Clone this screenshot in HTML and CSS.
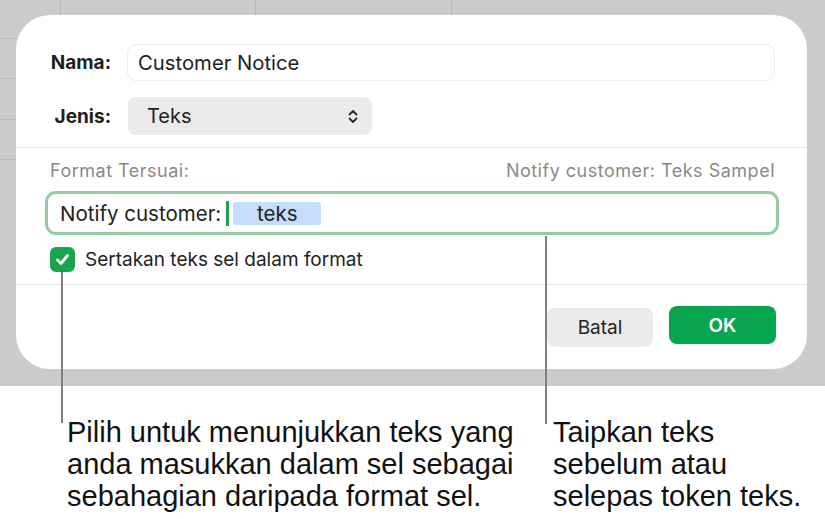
FILE: index.html
```html
<!DOCTYPE html>
<html lang="ms">
<head>
  <meta charset="UTF-8">
  <meta name="viewport" content="width=device-width, initial-scale=1.0">
  <title>Format Tersuai</title>
  <link rel="stylesheet" href="styles.css">
</head>
<body>
  <div class="page">
    <div class="canvas">
      <div class="dialog">
        <div class="fields">
          <label class="lbl" for="nama">Nama:</label>
          <div class="input" id="nama">Customer Notice</div>
          <label class="lbl">Jenis:</label>
          <div class="select">
            <span>Teks</span>
            <svg width="10" height="15" viewBox="0 0 10 15"><path d="M1.5 5.5 L5 2 L8.5 5.5 M1.5 9.5 L5 13 L8.5 9.5" fill="none" stroke="#2b2b2b" stroke-width="1.8" stroke-linecap="round" stroke-linejoin="round"/></svg>
          </div>
        </div>

        <div class="format">
          <div class="format-head">
            <span>Format Tersuai:</span>
            <span>Notify customer: Teks Sampel</span>
          </div>
          <div class="format-field">
            <span>Notify customer:</span>
            <span class="caret"></span>
            <span class="token">teks</span>
          </div>
          <div class="check">
            <span class="box">
              <svg width="17" height="17" viewBox="0 0 17 17"><path d="M3.5 9 L7 12.5 L13.5 4.5" fill="none" stroke="#fff" stroke-width="2.8" stroke-linecap="round" stroke-linejoin="round"/></svg>
            </span>
            <span>Sertakan teks sel dalam format</span>
          </div>
        </div>

        <div class="actions">
          <button class="btn">Batal</button>
          <button class="btn primary">OK</button>
        </div>
      </div>
    </div>

    <div class="captions">
      <p class="cap cap-left">Pilih untuk menunjukkan teks yang<br>anda masukkan dalam sel sebagai<br>sebahagian daripada format sel.</p>
      <p class="cap cap-right">Taipkan teks<br>sebelum atau<br>selepas token teks.</p>
    </div>

    <!-- callout leaders -->
    <span class="leader leader-check"></span>
    <span class="leader leader-field"></span>
  </div>
</body>
</html>
```

FILE: styles.css
```css
body {
  margin: 0;
  font-family: Inter, "Noto Sans", sans-serif;
  color: #222;
  background: #fff;
}

.page {
  position: relative;
  width: 825px;
  height: 519px;
  overflow: hidden;
}

.canvas {
  box-sizing: border-box;
  height: 386px;
  padding: 15px 0 0 16px;
  background-color: #cbcbcb;
  background-image:
    repeating-linear-gradient(to bottom, transparent 0 38px, #bababa 38px 39px, transparent 39px 40.3px),
    linear-gradient(to right, transparent 60px, #bababa 60px 61px, transparent 61px 255px, #bababa 255px 256px, transparent 256px 451px, #bababa 451px 452px, transparent 452px);
  background-size: 16px 170px, 100% 15px;
  background-repeat: no-repeat;
}

.dialog {
  box-sizing: border-box;
  width: 791px;
  height: 354px;
  background: #fff;
  border-radius: 34px;
  display: flex;
  flex-direction: column;
}

/* name + type */
.fields {
  display: grid;
  grid-template-columns: 61px 1fr;
  column-gap: 16px;
  row-gap: 16px;
  align-items: center;
  padding: 29px 32px 12px 34px;
  border-bottom: 1px solid #e3e3e3;
}

.lbl {
  text-align: right;
  font-size: 19px;
  font-weight: 700;
  color: #1e1e1e;
}

.input {
  box-sizing: border-box;
  height: 37px;
  padding: 0 10px;
  border: 1px solid #ededed;
  border-radius: 9px;
  font-size: 20.3px;
  display: flex;
  align-items: center;
}

.select {
  box-sizing: border-box;
  width: 244px;
  height: 38px;
  margin-left: 1px;
  padding: 0 14px 0 19px;
  background: #ebebeb;
  border-radius: 8px;
  font-size: 20px;
  display: flex;
  align-items: center;
  justify-content: space-between;
}

/* custom format */
.format {
  padding: 13px 32px 12px 34px;
  border-bottom: 1px solid #e3e3e3;
}

.format-head {
  display: flex;
  justify-content: space-between;
  font-size: 18px;
  letter-spacing: 0.5px;
  line-height: 20px;
  color: #8a8a8a;
}

.format-field {
  box-sizing: border-box;
  height: 44px;
  margin: 10px -4px 0 -5px;
  padding: 0 12px;
  border: 3px solid #95cba2;
  border-radius: 11px;
  font-size: 20.5px;
  display: flex;
  align-items: center;
}

.caret {
  width: 3px;
  height: 25px;
  margin: 0 4px 0 5px;
  background: #1ba54b;
}

.token {
  width: 88px;
  height: 23px;
  line-height: 23px;
  text-align: center;
  background: #c6dcfb;
  border-radius: 3px;
}

.check {
  margin-top: 12px;
  height: 25px;
  display: flex;
  align-items: center;
  gap: 10px;
  font-size: 19px;
}

.box {
  width: 25px;
  height: 25px;
  border-radius: 6px;
  background: #1ba54b;
  display: flex;
  align-items: center;
  justify-content: center;
}

/* buttons */
.actions {
  display: flex;
  justify-content: flex-end;
  align-items: flex-start;
  gap: 16px;
  padding: 21px 31px 0 0;
}

.btn {
  width: 106px;
  height: 39px;
  margin-top: 2px;
  border: none;
  border-radius: 8px;
  background: #ebebeb;
  font-family: inherit;
  font-size: 19px;
  color: #222;
}

.btn.primary {
  width: 107px;
  height: 38px;
  margin-top: 0;
  background: #07a54e;
  color: #fff;
  font-weight: 600;
}

/* captions */
.captions {
  display: flex;
  padding: 30px 0 0 67px;
}

.cap {
  margin: 0;
  font-family: "Liberation Sans", Arial, sans-serif;
  font-size: 29px;
  line-height: 32px;
  color: #111;
}

.cap-left {
  width: 486px;
}

.leader {
  position: absolute;
  width: 2px;
  background: #808080;
}

.leader-check {
  left: 61px;
  top: 272px;
  height: 151px;
}

.leader-field {
  left: 545px;
  top: 236px;
  height: 188px;
}
```
